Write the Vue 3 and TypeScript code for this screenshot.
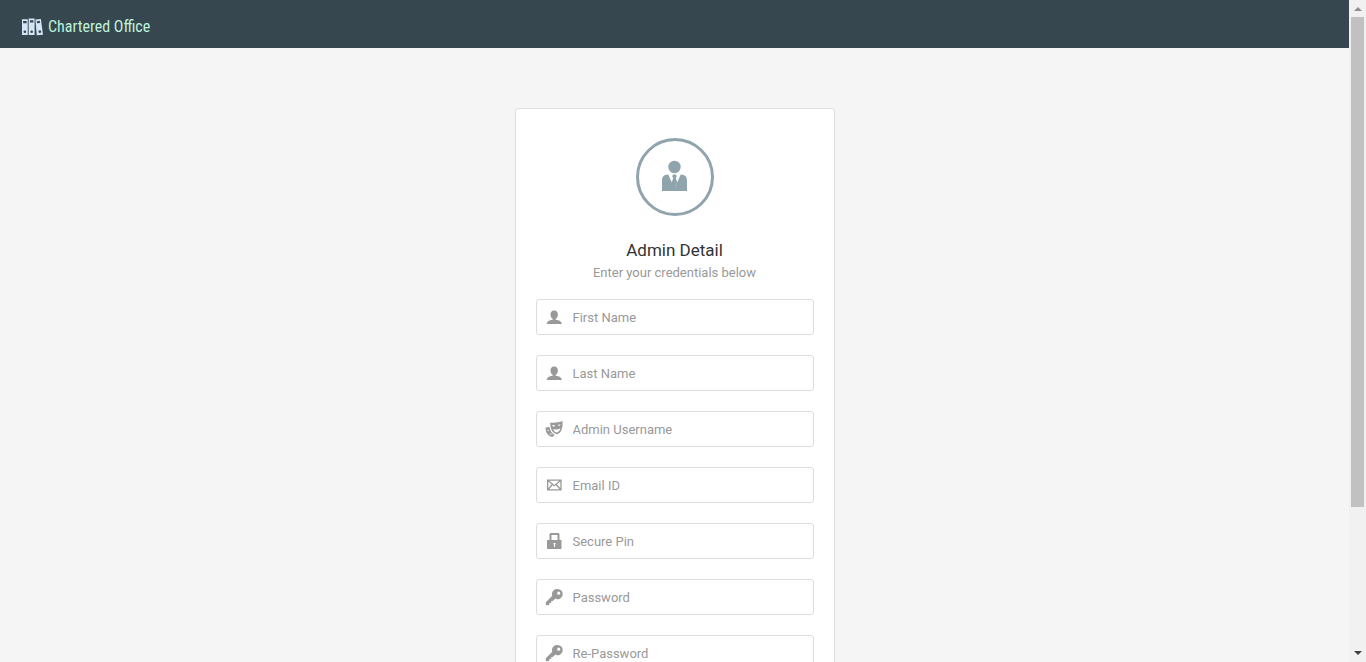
<script setup lang="ts">
import { reactive } from 'vue'

type IconName = 'user' | 'masks' | 'mail' | 'lock' | 'key'

interface Field {
  id: string
  label: string
  type: string
  icon: IconName
}

const fields: Field[] = [
  { id: 'first-name', label: 'First Name', type: 'text', icon: 'user' },
  { id: 'last-name', label: 'Last Name', type: 'text', icon: 'user' },
  { id: 'username', label: 'Admin Username', type: 'text', icon: 'masks' },
  { id: 'email', label: 'Email ID', type: 'email', icon: 'mail' },
  { id: 'pin', label: 'Secure Pin', type: 'password', icon: 'lock' },
  { id: 'password', label: 'Password', type: 'password', icon: 'key' },
  { id: 'password-again', label: 'Re-Password', type: 'password', icon: 'key' },
]

const values = reactive<Record<string, string>>({})
</script>

<template>
  <div class="shell">
    <div class="page">
      <header class="navbar">
        <a class="brand" href="#">
          <svg class="brand-icon" viewBox="0 0 22 18" aria-hidden="true">
            <path fill="#d3e5f6" fill-rule="evenodd" d="M0 1h6v16.500H0zM1.200 2.600v2.400h3.600V2.600zM3 12.600a1.400 1.400 0 1 0 0 2.800 1.400 1.400 0 0 0 0-2.800z" />
            <path fill="#d3e5f6" fill-rule="evenodd" d="M7 0h6.200v17.500H7zM8.300 1.800v2.400h3.600V1.800zM10.100 12.600a1.400 1.400 0 1 0 0 2.800 1.400 1.400 0 0 0 0-2.800z" />
            <path fill="#d3e5f6" fill-rule="evenodd" d="M14 1.200 19.800.6 22 17l-6.500.6zM15.500 2.900l.4 2.300 3-.4-.4-2.300zM18.500 12.400a1.400 1.400 0 1 0 .4 2.800 1.400 1.400 0 0 0-.4-2.800z" />
          </svg>
          <span>Chartered Office</span>
        </a>
      </header>

      <main class="content">
        <form class="card" @submit.prevent>
          <div class="avatar">
            <svg viewBox="0 0 32 32" aria-hidden="true">
              <circle cx="15.500" cy="6" r="6.200" />
              <path d="M9.300 13.500 15 26.500V30H3V19.500c0-3.500 1.600-5.800 6.300-6zM21.700 13.500 16 26.500V30h12V19.500c0-3.500-1.600-5.800-6.300-6zM14 13.500h3l.8 1.800-1 1.700 1.500 4.500-2.300 5.500V30h-1v-3l-2.300-5.500 1.500-4.500-1-1.700z" />
            </svg>
          </div>
          <h1 class="title">Admin Detail</h1>
          <p class="subtitle">Enter your credentials below</p>

          <div v-for="field in fields" :key="field.id" class="field">
            <label class="field-icon" :for="field.id">
              <svg v-if="field.icon === 'user'" viewBox="0 0 16 16" aria-hidden="true">
                <path d="M9.700 10.700v-.9c1.200-.7 2.200-2.300 2.200-4.100 0-2.400-1-4.200-3.700-4.200S4.500 3.300 4.500 5.700c0 1.800 1 3.400 2.200 4.100v.9C3.300 11 .8 12.500.8 15h15c0-2.500-2.700-4-6.100-4.300z" />
              </svg>
              <svg v-else-if="field.icon === 'masks'" class="wide" viewBox="0 0 18 18" aria-hidden="true">
                <path fill-rule="evenodd" d="M5.200 2.500c4 .5 8 .2 12.300-1.500.5 6.500-.8 12-5.300 13.300C7.600 13.500 5.300 9.500 5.200 2.500zM7 5.500c.9 1 2.300 1.200 3.400.4C9.500 4.900 8 4.800 7 5.500zm5.600.1c1.100.6 2.400.1 3.100-1-1.200-.4-2.500 0-3.100 1zM8 9c.8 2 2.200 3.300 4 3.500 1.800-.7 3-2.200 3.500-4.200C13.200 9.700 10.600 9.900 8 9z" />
                <path fill-rule="evenodd" d="M.5 7.600c1.300.1 2.600-.2 3.800-.8.7 3.200 2 6.200 5.100 8-.5 1.200-1 1.700-2.200 2.200C3.200 16.400.7 13 .5 7.600zm1.600 2.700c.6.7 1.400.8 2.100.3-.6-.7-1.200-.8-2.100-.3zm2.600 4.600c.9-.9 1.900-.9 3.100-.3-1.300-1.500-2.900-1.400-3.100.3z" />
              </svg>
              <svg v-else-if="field.icon === 'mail'" viewBox="0 0 16 16" aria-hidden="true">
                <path fill="none" stroke="currentColor" stroke-width="1.300" d="M1.600 3.100h13.400v9.800H1.600zM2 3.500l6.300 5.200 6.300-5.200M2 12.500l4.400-5M14.600 12.500l-4.400-5" />
              </svg>
              <svg v-else-if="field.icon === 'lock'" viewBox="0 0 16 16" aria-hidden="true">
                <path fill-rule="evenodd" d="M3.500 7V1l1-1h8l1 1v6H15l.5.500v8l-.5.500H1.500l-.5-.5v-8l.5-.5zm2 0h6V2h-6zm2 3v1l.4.600V14h1.200v-2.400l.4-.6v-1z" />
              </svg>
              <svg v-else class="wide" viewBox="0 0 18 18" aria-hidden="true">
                <path fill-rule="evenodd" d="M12 1a5 5 0 0 0-4.700 6.800L.8 14.300v2.200l.7.7h2l.8-.8v-1.300h1.300l.7-.7v-1.300h1.500l2.500-2.500A5.100 5.100 0 1 0 12 1zm1.700 2.600a1.600 1.600 0 1 1 0 3.200 1.600 1.600 0 0 1 0-3.200z" />
              </svg>
            </label>
            <input
              :id="field.id"
              v-model="values[field.id]"
              :type="field.type"
              :placeholder="field.label"
              :aria-label="field.label"
            />
          </div>
        </form>
      </main>
    </div>

    <div class="scrollbar" aria-hidden="true">
      <svg class="arrow" viewBox="0 0 17 17"><path fill="#8f8f8f" d="M5 11l4-4 4 4z" /></svg>
      <div class="track"><div class="thumb"></div></div>
      <svg class="arrow" viewBox="0 0 17 17"><path fill="#404040" d="M5 6l4 4 4-4z" /></svg>
    </div>
  </div>
</template>

<style>
body {
  margin: 0;
  background: #f5f5f5;
}
</style>

<style scoped>
.shell {
  display: flex;
  height: 100vh;
  font-family: Roboto, "Liberation Sans", sans-serif;
  font-size: 13px;
  line-height: 20px;
  color: #333;
  background: #f5f5f5;
}

.page {
  flex: 1;
  min-width: 0;
  overflow-y: auto;
  scrollbar-width: none;
}

.navbar {
  box-sizing: border-box;
  display: flex;
  height: 48px;
  padding: 6px 22px 0;
  background: #37474f;
}

.brand {
  display: flex;
  align-items: center;
  gap: 5px;
  color: #bdf3da;
  font-family: "Roboto Condensed", "Liberation Sans Narrow", Roboto, "Liberation Sans", sans-serif;
  font-size: 16px;
  text-decoration: none;
}

.brand-icon {
  width: 21px;
  height: 18px;
}

.content {
  padding: 60px 20px;
}

.card {
  box-sizing: border-box;
  max-width: 320px;
  margin: 0 auto;
  padding: 29px 20px 20px;
  background: #fff;
  border: 1px solid #ddd;
  border-radius: 3px;
}

.avatar {
  box-sizing: border-box;
  display: flex;
  align-items: center;
  justify-content: center;
  width: 78px;
  height: 78px;
  margin: 0 auto;
  border: 3px solid #90a4ae;
  border-radius: 50%;
}

.avatar svg {
  width: 32px;
  height: 32px;
  fill: #90a4ae;
  overflow: visible;
}

.title {
  margin: 22px 0 0;
  font-size: 17px;
  line-height: 24px;
  font-weight: 400;
  text-align: center;
}

.subtitle {
  margin: 1px 0 16px;
  color: #999;
  text-align: center;
}

.field {
  display: flex;
  align-items: center;
  box-sizing: border-box;
  height: 36px;
  margin-bottom: 20px;
  border: 1px solid #ddd;
  border-radius: 3px;
}

.field:focus-within {
  border-color: #90a4ae;
}

.field-icon {
  display: flex;
  align-items: center;
  justify-content: center;
  flex: none;
  width: 34px;
  color: #999;
}

.field-icon svg {
  width: 16px;
  height: 16px;
  fill: currentColor;
}

.field-icon svg.wide {
  width: 18px;
  height: 18px;
}

.field input {
  flex: 1;
  min-width: 0;
  height: 34px;
  padding: 0 12px 0 2px;
  border: 0;
  outline: 0;
  background: transparent;
  color: #333;
  font: inherit;
}

.field input::placeholder {
  color: #999;
  opacity: 1;
}

.scrollbar {
  display: flex;
  flex-direction: column;
  flex: none;
  width: 17px;
  background: #f1f1f1;
}

.arrow {
  width: 17px;
  height: 17px;
}

.track {
  flex: 1;
  padding: 0 2px;
}

.thumb {
  height: 78%;
  background: #c1c1c1;
}
</style>
